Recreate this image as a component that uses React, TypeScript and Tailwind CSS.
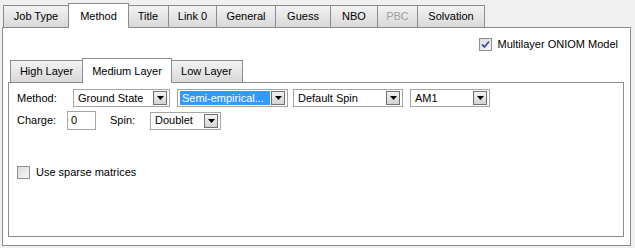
import React from "react";

const font = { fontFamily: '"Liberation Sans", Arial, sans-serif' };

function Tab({ label, w, active, disabled }: { label: string; w: number; active?: boolean; disabled?: boolean }) {
  if (active) {
    return (
      <div
        className="relative z-10 -mb-px -mx-[1px] flex h-[25px] items-start justify-center border border-b-0 border-[#898c95] bg-white pt-[4px] text-black"
        style={{ width: w + 2 }}
      >
        {label}
      </div>
    );
  }
  return (
    <div
      className={`flex h-[22px] items-center justify-center border border-b-0 border-[#898c95] bg-gradient-to-b from-[#f3f3f3] to-[#d9d9d9] -ml-px first:ml-0 ${disabled ? "text-[#a0a0a0]" : "text-black"}`}
      style={{ width: w }}
    >
      {label}
    </div>
  );
}

function DropBtn() {
  return (
    <div className="flex h-[14px] w-[14px] items-center justify-center border border-[#707070] bg-gradient-to-b from-[#f2f2f2] to-[#d4d4d4]">
      <svg width="7" height="4" viewBox="0 0 7 4">
        <path d="M0 0 H7 L3.5 4 Z" fill="#000" />
      </svg>
    </div>
  );
}

function Combo({ text, w, selected }: { text: string; w: number; selected?: boolean }) {
  return (
    <div
      className="flex h-[18px] items-center justify-between border border-[#a5a5a5] bg-white pl-[2px] pr-[2px]"
      style={{ width: w }}
    >
      {selected ? (
        <div className="flex h-[14px] flex-1 items-center bg-[#3399ff] pl-[2px] text-white mr-[1px]">{text}</div>
      ) : (
        <div className="pl-[2px] text-black">{text}</div>
      )}
      <DropBtn />
    </div>
  );
}

export default function App() {
  return (
    <div className="h-[248px] w-[635px] overflow-hidden bg-[#f0f0f0] pl-[2px] pt-[5px] text-[11px]" style={font}>
      <div className="flex h-[22px] items-end pl-[1px]">
        <Tab label="Job Type" w={66} />
        <Tab label="Method" w={59} active />
        <Tab label="Title" w={42} />
        <Tab label="Link 0" w={49} />
        <Tab label="General" w={60} />
        <Tab label="Guess" w={56} />
        <Tab label="NBO" w={48} />
        <Tab label="PBC" w={41} disabled />
        <Tab label="Solvation" w={68} />
      </div>
      <div className="flex h-[219px] w-[629px] flex-col border border-[#898c95] bg-white">
        <div className="flex h-[32px] items-center justify-end pr-[12px] pt-[1px]">
          <div className="flex items-center gap-[6px]">
            <div className="flex h-[13px] w-[13px] items-center justify-center border border-[#8f8f8f] bg-gradient-to-br from-[#dcdcdc] to-[#f8f8f8]">
              <svg width="9" height="9" viewBox="0 0 9 9">
                <path d="M1 4.5 L3.5 7 L8 1.5" stroke="#3c4f9c" strokeWidth="1.8" fill="none" />
              </svg>
            </div>
            <span>Multilayer ONIOM Model</span>
          </div>
        </div>
        <div className="pl-[5px] pr-[6px]">
          <div className="flex h-[22px] items-end pl-[2px]">
            <Tab label="High Layer" w={73} />
            <Tab label="Medium Layer" w={88} active />
            <Tab label="Low Layer" w={73} />
          </div>
          <div className="flex h-[155px] w-[616px] flex-col border border-[#898c95] bg-white px-[8px] pt-[6px]">
            <div className="flex items-center">
              <span className="w-[56px]">Method:</span>
              <Combo text="Ground State" w={97} />
              <div className="w-[7px]" />
              <Combo text="Semi-empirical..." w={111} selected />
              <div className="w-[5px]" />
              <Combo text="Default Spin" w={110} />
              <div className="w-[7px]" />
              <Combo text="AM1" w={80} />
            </div>
            <div className="mt-[4px] flex items-center">
              <span className="w-[50px]">Charge:</span>
              <div className="flex h-[19px] w-[29px] items-center border border-[#a5a5a5] pl-[3px]">0</div>
              <span className="ml-[14px] w-[40px]">Spin:</span>
              <Combo text="Doublet" w={71} />
            </div>
            <div className="mt-[34px] flex items-center gap-[6px]">
              <div className="h-[13px] w-[13px] border border-[#8f8f8f] bg-gradient-to-br from-[#dcdcdc] to-[#f8f8f8]" />
              <span>Use sparse matrices</span>
            </div>
          </div>
        </div>
      </div>
    </div>
  );
}
